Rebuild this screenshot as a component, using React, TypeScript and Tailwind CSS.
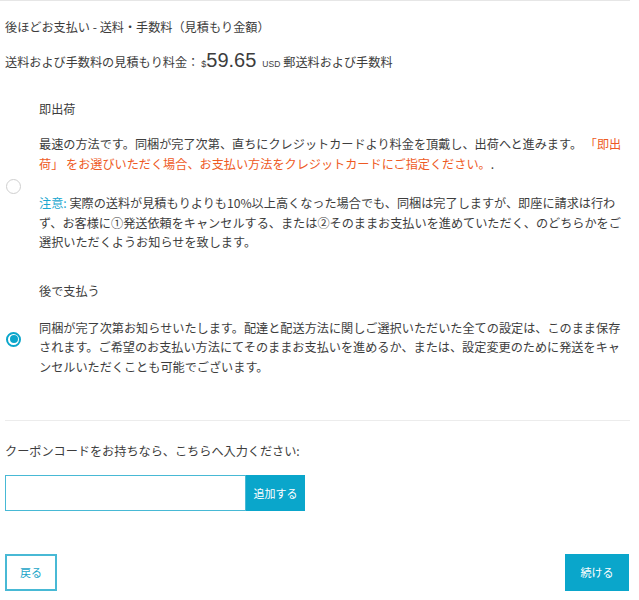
import React from "react";

const font = { fontFamily: '"Noto Sans CJK JP", "Noto Sans", sans-serif' };
const latin = { fontFamily: '"Liberation Sans", Arial, sans-serif' };

function Radio({ checked }: { checked?: boolean }) {
  if (checked) {
    return (
      <span className="flex h-[15px] w-[15px] items-center justify-center rounded-full border-2 border-[#0aa6cb] bg-white">
        <span className="h-[8px] w-[8px] rounded-full bg-[#0aa6cb]" />
      </span>
    );
  }
  return <span className="block h-[15px] w-[15px] rounded-full border border-[#cfcfcf] bg-white" />;
}

function Option({
  checked,
  title,
  children,
}: {
  checked?: boolean;
  title: string;
  children: React.ReactNode;
}) {
  return (
    <div className="flex items-center">
      <div className="w-[34px] shrink-0 pl-[1px]">
        <Radio checked={checked} />
      </div>
      <div className="w-[586px] pb-[22px]">
        <div className="leading-[20px]">{title}</div>
        {children}
      </div>
    </div>
  );
}

function Line({ children }: { children: React.ReactNode }) {
  return <span className="block h-[19.5px] whitespace-nowrap leading-[19.5px]">{children}</span>;
}

export default function App() {
  return (
    <div className="min-h-screen bg-white text-[12.15px] text-[#3d3d3d]" style={font}>
      <div className="w-[630px] border-t border-[#e6e6e6] pl-[5px]">
        <div className="pt-[16px] leading-[20px]">後ほどお支払い - 送料・手数料（見積もり金額）</div>

        <div className="mt-[11px] flex h-[24px] items-baseline leading-[24px]">
          <span>送料および手数料の見積もり料金：</span>
          <span className="ml-[2px] text-[9px]" style={latin}>$</span>
          <span className="text-[20px]" style={latin}>59.65</span>
          <span className="ml-[6px] text-[8.5px]" style={latin}>USD</span>
          <span className="ml-[3px]">郵送料および手数料</span>
        </div>

        <div className="mt-[27px]">
          <Option title="即出荷">
            <div className="mt-[15px]">
              <Line>
                最速の方法です。同梱が完了次第、直ちにクレジットカードより料金を頂戴し、出荷へと進みます。{" "}
                <span className="text-[#ee5a24]">「即出</span>
              </Line>
              <Line>
                <span className="text-[#ee5a24]">荷」 をお選びいただく場合、お支払い方法をクレジットカードにご指定ください。</span>.
              </Line>
            </div>
            <div className="mt-[20px]">
              <Line>
                <span className="text-[#1aa7cf]">注意:</span> 実際の送料が見積もりよりも10%以上高くなった場合でも、同梱は完了しますが、即座に請求は行わ
              </Line>
              <Line>ず、お客様に①発送依頼をキャンセルする、または②そのままお支払いを進めていただく、のどちらかをご</Line>
              <Line>選択いただくようお知らせを致します。</Line>
            </div>
          </Option>
          <div className="mt-[7px]">
            <Option checked title="後で支払う">
              <div className="mt-[17px]">
                <Line>同梱が完了次第お知らせいたします。配達と配送方法に関しご選択いただいた全ての設定は、このまま保存</Line>
                <Line>されます。ご希望のお支払い方法にてそのままお支払いを進めるか、または、設定変更のために発送をキャ</Line>
                <Line>ンセルいただくことも可能でございます。</Line>
              </div>
            </Option>
          </div>
        </div>

        <div className="mt-[22px] border-t border-[#ececec]" />

        <div className="mt-[20px] leading-[20px]">クーポンコードをお持ちなら、こちらへ入力ください:</div>

        <div className="mt-[14px] flex h-[36px]">
          <input
            type="text"
            className="h-full w-[241px] border border-[#48b9d5] bg-white px-2 outline-none"
          />
          <button className="h-full w-[59px] bg-[#0aa6cb] text-[11px] text-white">追加する</button>
        </div>

        <div className="mt-[43px] flex items-center justify-between">
          <button className="h-[37px] w-[52px] border-2 border-[#48b9d5] bg-white text-[11px] text-[#1aa4c8]">
            戻る
          </button>
          <button className="mr-[1px] h-[37px] w-[64px] bg-[#0aa6cb] text-[11px] text-white">続ける</button>
        </div>
      </div>
    </div>
  );
}
